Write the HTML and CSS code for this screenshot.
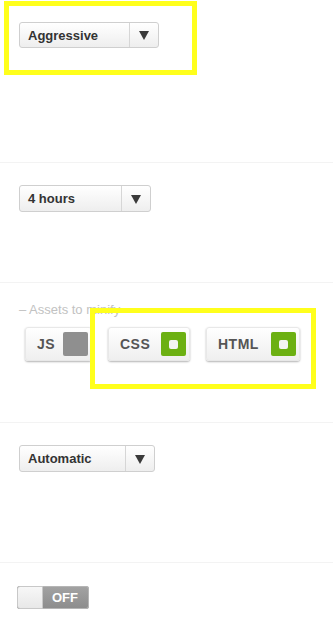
FILE: index.html
```html
<!DOCTYPE html>
<html lang="en">
<head>
    <meta charset="UTF-8">
    <meta name="viewport" content="width=device-width, initial-scale=1.0">
    <title>Settings</title>
    <link rel="stylesheet" href="styles.css">
</head>
<body>
    <div class="page">
        <div class="section section-first">
            <div class="select select-mode">
                <span class="select-value">Aggressive</span>
                <span class="select-arrow"></span>
            </div>
        </div>

        <div class="section section-short">
            <div class="select select-time">
                <span class="select-value">4 hours</span>
                <span class="select-arrow"></span>
            </div>
        </div>

        <div class="section section-assets">
            <div class="assets-label">&ndash; Assets to minify</div>
            <div class="assets">
                <div class="asset asset-js">
                    <span class="asset-name">JS</span>
                    <span class="check"></span>
                </div>
                <div class="asset asset-css">
                    <span class="asset-name">CSS</span>
                    <span class="check on"></span>
                </div>
                <div class="asset asset-html">
                    <span class="asset-name">HTML</span>
                    <span class="check on"></span>
                </div>
            </div>
        </div>

        <div class="section">
            <div class="select select-auto">
                <span class="select-value">Automatic</span>
                <span class="select-arrow"></span>
            </div>
        </div>

        <div class="section section-last">
            <div class="toggle">
                <span class="toggle-knob"></span>
                <span class="toggle-text">OFF</span>
            </div>
        </div>

        <!-- highlight marks -->
        <div class="mark mark-top"></div>
        <div class="mark mark-assets"></div>
    </div>
</body>
</html>
```

FILE: styles.css
```css
body {
    margin: 0;
    padding: 0;
    background: #fff;
    font-family: "Liberation Sans", Arial, sans-serif;
    color: #333;
}
.page {
    position: relative;
    width: 333px;
    height: 626px;
    overflow: hidden;
}
.section {
    box-sizing: border-box;
    height: 140px;
    padding: 22px 19px 0;
    border-bottom: 1px solid #f3f3f3;
}
.section-first {
    height: 163px;
}
.section-short {
    height: 120px;
}
.section-assets {
    padding-top: 19px;
}
.section-last {
    border-bottom: none;
    padding-left: 17px;
    padding-top: 23px;
}
.select {
    box-sizing: border-box;
    display: flex;
    height: 27px;
    border: 1px solid #cfcfcf;
    border-radius: 3px;
    background: linear-gradient(#ffffff, #eeeeee);
    font-size: 13px;
    font-weight: bold;
}
.select-mode {
    width: 140px;
    height: 26px;
}
.select-time {
    width: 132px;
}
.select-auto {
    width: 136px;
}
.select-value {
    flex: 1;
    display: flex;
    align-items: center;
    padding-left: 8px;
    border-right: 1px solid #d6d6d6;
}
.select-arrow {
    width: 28px;
    display: flex;
    align-items: center;
    justify-content: center;
}
.select-arrow::after {
    content: "";
    margin-top: 1px;
    border-left: 5px solid transparent;
    border-right: 5px solid transparent;
    border-top: 9px solid #3a3a3a;
}
.assets-label {
    font-size: 13px;
    line-height: 16px;
    color: #c2c2c2;
}
.assets {
    display: flex;
    gap: 16px;
    margin-top: 9px;
    padding-left: 6px;
}
.asset {
    box-sizing: border-box;
    display: flex;
    align-items: center;
    justify-content: space-between;
    height: 34px;
    padding: 0 3px 0 11px;
    border-radius: 3px;
    background: linear-gradient(#ffffff, #efefef);
    box-shadow: 0 1px 2px rgba(0, 0, 0, 0.3);
    border: 1px solid #e8e8e8;
}
.asset-js {
    width: 67px;
}
.asset-css {
    width: 82px;
}
.asset-html {
    width: 94px;
}
.asset-name {
    font-size: 14px;
    font-weight: bold;
    letter-spacing: 0.5px;
    color: #555;
}
.check {
    width: 25px;
    height: 24px;
    border-radius: 2px;
    background: #8f8f8f;
    display: flex;
    align-items: center;
    justify-content: center;
}
.check.on {
    background: #6cb012;
}
.check.on::after {
    content: "";
    width: 9px;
    height: 9px;
    border-radius: 2px;
    background: #f4f4f4;
}
.toggle {
    display: flex;
    width: 72px;
    height: 23px;
    border-radius: 3px;
    overflow: hidden;
    background: linear-gradient(#a3a3a3, #8c8c8c);
    box-shadow: 0 0 0 1px #b5b5b5 inset;
}
.toggle-knob {
    box-sizing: border-box;
    width: 26px;
    border: 1px solid #c8c8c8;
    border-radius: 3px 0 0 3px;
    background: linear-gradient(#f7f7f7, #e8e8e8);
}
.toggle-text {
    display: flex;
    align-items: center;
    padding-left: 9px;
    font-size: 13px;
    font-weight: bold;
    color: #fff;
}
.mark {
    position: absolute;
    box-sizing: border-box;
    border: 5px solid #ffff1c;
}
.mark-top {
    left: 4px;
    top: 1px;
    width: 193px;
    height: 74px;
}
.mark-assets {
    left: 90px;
    top: 308px;
    width: 226px;
    height: 81px;
}
```
